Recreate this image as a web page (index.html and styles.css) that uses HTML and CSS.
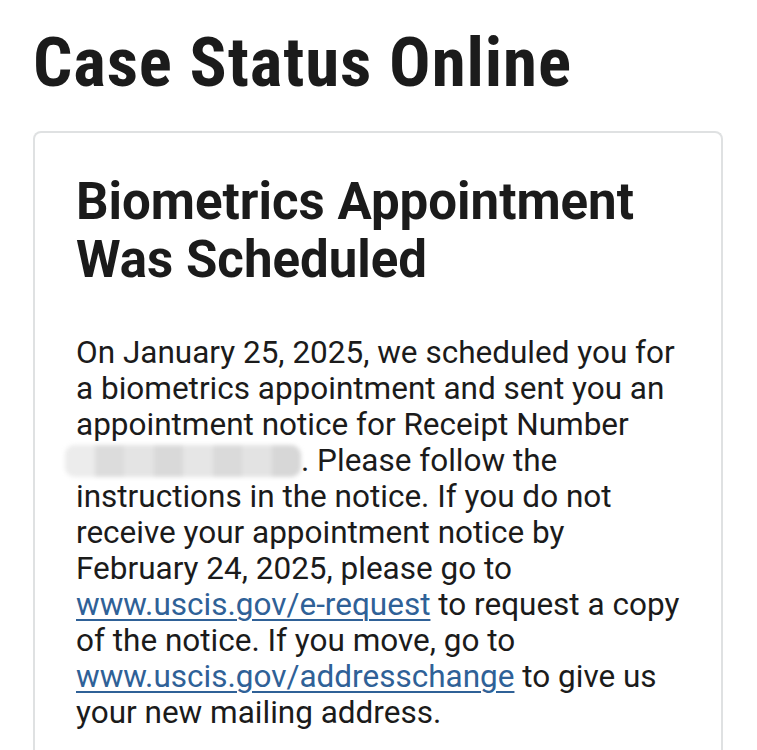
FILE: index.html
```html
<!DOCTYPE html>
<html lang="en">
<head>
<meta charset="utf-8">
<title>Case Status Online</title>
<link rel="stylesheet" href="styles.css">
</head>
<body>
<main class="page">
  <h1 class="page-title">Case Status Online</h1>
  <section class="card">
    <h2 class="card-title">Biometrics Appointment Was Scheduled</h2>
    <p class="card-text">On January 25, 2025, we scheduled you for a biometrics appointment and sent you an appointment notice for Receipt Number <span class="redacted"><span class="px p1"></span><span class="px p2"></span><span class="px p3"></span><span class="px p4"></span><span class="px p5"></span><span class="px p6"></span><span class="px p7"></span><span class="px p8"></span></span>. Please follow the instructions in the notice. If you do not receive your appointment notice by February 24, 2025, please go to <a class="link" href="#">www.uscis.gov/e-request</a> to request a copy of the notice. If you move, go to <a class="link" href="#">www.uscis.gov/addresschange</a> to give us your new mailing address.</p>
  </section>
</main>
</body>
</html>
```

FILE: styles.css
```css
html, body {
  margin: 0;
  padding: 0;
  background: #ffffff;
}

body {
  font-family: Roboto, "Liberation Sans", sans-serif;
  color: #1b1b1b;
}

.page {
  padding: 30px 34px 0 33px;
}

.page-title {
  margin: 0 0 35px 0;
  font-size: 69px;
  font-weight: 700;
  line-height: 66px;
  letter-spacing: 0.9px;
  font-stretch: condensed;
}

.card {
  border: 2px solid #dfe1e2;
  border-bottom: none;
  border-radius: 8px 8px 0 0;
  padding: 40px 34px 40px 41px;
  min-height: 640px;
}

.card-title {
  margin: 0 0 46px 0;
  font-size: 51px;
  font-weight: 700;
  line-height: 58px;
}

.card-text {
  margin: 0;
  font-size: 31.5px;
  line-height: 36px;
  font-weight: 400;
}

.link {
  color: #2f6197;
  text-decoration: underline;
  text-decoration-thickness: 2px;
  text-underline-offset: 4px;
}

.redacted {
  display: inline-flex;
  vertical-align: -6px;
  height: 32px;
  width: 236px;
  margin-left: -11px;
  border-radius: 10px;
  overflow: hidden;
  background: #e9e9e9;
  filter: blur(2px);
}

.px {
  flex: 1;
  height: 100%;
}

.p1 { background: #ececec; }
.p2 { background: #dcdcdc; }
.p3 { background: #e4e4e4; }
.p4 { background: #d9d9d9; }
.p5 { background: #e6e6e6; }
.p6 { background: #dadada; }
.p7 { background: #e3e3e3; }
.p8 { background: #d7d7d7; }
```
